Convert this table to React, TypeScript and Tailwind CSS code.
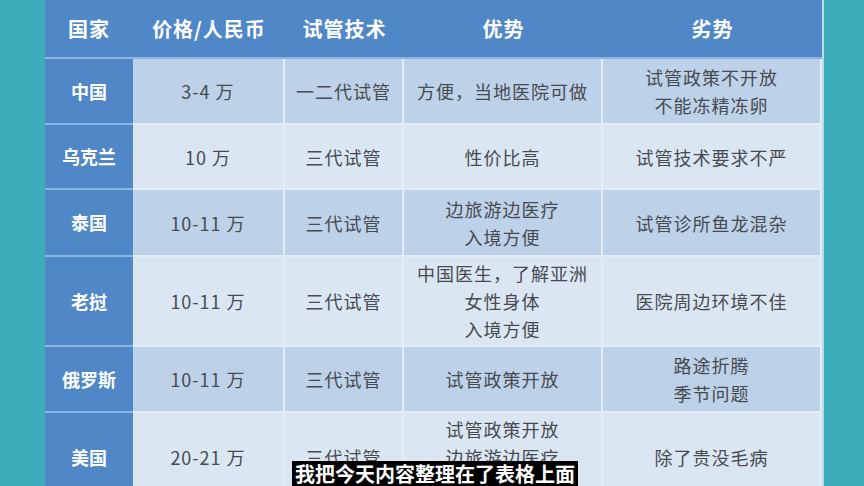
import React from "react";

const rows: { name: string; price: string; tech: string; pro: string[]; con: string[]; h: string; tone: "dark" | "light" }[] = [
  { name: "中国", price: "3-4 万", tech: "一二代试管", pro: ["方便，当地医院可做"], con: ["试管政策不开放", "不能冻精冻卵"], h: "h-[66px]", tone: "dark" },
  { name: "乌克兰", price: "10 万", tech: "三代试管", pro: ["性价比高"], con: ["试管技术要求不严"], h: "h-[65px]", tone: "light" },
  { name: "泰国", price: "10-11 万", tech: "三代试管", pro: ["边旅游边医疗", "入境方便"], con: ["试管诊所鱼龙混杂"], h: "h-[67px]", tone: "dark" },
  { name: "老挝", price: "10-11 万", tech: "三代试管", pro: ["中国医生，了解亚洲", "女性身体", "入境方便"], con: ["医院周边环境不佳"], h: "h-[90px]", tone: "light" },
  { name: "俄罗斯", price: "10-11 万", tech: "三代试管", pro: ["试管政策开放"], con: ["路途折腾", "季节问题"], h: "h-[66px]", tone: "dark" },
  { name: "美国", price: "20-21 万", tech: "三代试管", pro: ["试管政策开放", "边旅游边医疗", "入境方便"], con: ["除了贵没毛病"], h: "h-[90px]", tone: "light" },
];

const font = { fontFamily: '"Noto Sans CJK SC", "Noto Sans", sans-serif' };

function Cell({ lines, bg, h }: { lines: string[]; bg: string; h: string }) {
  return (
    <div className={`${h} ${bg} flex flex-col items-center justify-center border-r-2 border-b-2 border-[#e4edf7] text-[18px] leading-[28px] tracking-[1px] text-[#474b50]`}>
      {lines.map((l) => (
        <span key={l}>{l}</span>
      ))}
    </div>
  );
}

export default function App() {
  return (
    <div className="relative w-[864px] h-[486px] overflow-hidden bg-[#3dadbb]" style={font}>
      <div className="ml-[45px] w-[779px] border-r-2 border-[#b9dde6]">
        <div className="grid grid-cols-[88px_152px_119px_199px_219px] h-[59px] bg-[#4f87c7] border-b-2 border-[#8ab4e2] text-white font-bold text-[20px] tracking-[1px]">
          {["国家", "价格/人民币", "试管技术", "优势", "劣势"].map((t) => (
            <div key={t} className="flex items-center justify-center">{t}</div>
          ))}
        </div>
        {rows.map((r) => {
          const bg = r.tone === "dark" ? "bg-[#bdd1e9]" : "bg-[#dbe6f3]";
          return (
            <div key={r.name} className="grid grid-cols-[88px_152px_119px_199px_219px]">
              <div className={`${r.h} flex items-center justify-center bg-[#4f87c7] border-b-2 border-[#8ab4e2] text-white font-bold text-[18px]`}>
                {r.name}
              </div>
              <Cell lines={[r.price]} bg={bg} h={r.h} />
              <Cell lines={[r.tech]} bg={bg} h={r.h} />
              <Cell lines={r.pro} bg={bg} h={r.h} />
              <Cell lines={r.con} bg={bg} h={r.h} />
            </div>
          );
        })}
      </div>
      <div className="absolute left-[292px] top-[461px] bg-black px-[3px] text-white font-bold text-[20px] leading-[25px]">
        我把今天内容整理在了表格上面
      </div>
    </div>
  );
}
